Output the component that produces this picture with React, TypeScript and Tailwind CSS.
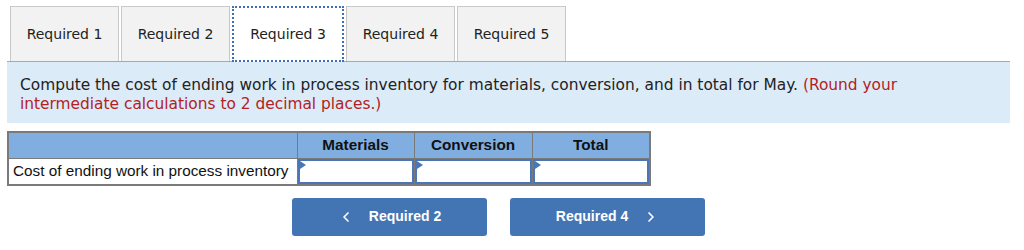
import React from "react";
import { ChevronLeft, ChevronRight } from "lucide-react";

const tabs = ["Required 1", "Required 2", "Required 3", "Required 4", "Required 5"];

const InputCell = () => (
  <td className="p-0 border border-[#7a7a7a]">
    <div className="relative h-[25px] border-2 border-[#4a76b6] bg-white">
      <span className="absolute left-0 top-0 w-0 h-0 border-t-[4px] border-b-[4px] border-l-[6px] border-t-transparent border-b-transparent border-l-[#4a76b6]" />
    </div>
  </td>
);

const App = () => {
  const active = 2;

  return (
    <div className="w-[1024px] h-[250px] bg-white overflow-hidden" style={{ fontFamily: "'DejaVu Sans', Verdana, sans-serif" }}>
      <div className="flex gap-[2px] pl-[10px] pt-[6px]">
        {tabs.map((t, i) =>
          i === active ? (
            <div
              key={t}
              className="w-[112px] h-[56px] flex items-center justify-center bg-white border-2 border-dotted border-[#3f6fb5] text-[14px] text-[#222] -mb-[1px] z-10"
            >
              {t}
            </div>
          ) : (
            <div
              key={t}
              className="w-[109px] h-[55px] flex items-center justify-center bg-[#f2f2f2] border border-[#c8c8c8] border-b-0 text-[14px] text-[#222]"
            >
              {t}
            </div>
          )
        )}
      </div>

      <div className="ml-[7px] w-[1003px] h-[62px] border-t border-[#a9a9a9] bg-[#dcebf8] px-[13px] pt-[14px] text-[15.4px] leading-[19px] text-[#222]">
        Compute the cost of ending work in process inventory for materials, conversion, and in total for May.{" "}
        <span className="text-[#b22222]">(Round your intermediate calculations to 2 decimal places.)</span>
      </div>

      <table
        className="ml-[7px] mt-[8px] border-collapse border-2 border-[#7a7a7a] text-[15.3px] text-[#111]"
        style={{ fontFamily: "'Liberation Sans', Arial, sans-serif" }}
      >
        <thead>
          <tr className="bg-[#80aee0] h-[26px]">
            <th className="w-[289px] border border-[#7a7a7a]" />
            <th className="w-[117px] border border-[#7a7a7a] font-bold">Materials</th>
            <th className="w-[118px] border border-[#7a7a7a] font-bold">Conversion</th>
            <th className="w-[118px] border border-[#7a7a7a] font-bold">Total</th>
          </tr>
        </thead>
        <tbody>
          <tr className="h-[26px]">
            <td className="border border-[#7a7a7a] px-[4px] text-left whitespace-nowrap leading-[18px]">Cost of ending work in process inventory</td>
            <InputCell />
            <InputCell />
            <InputCell />
          </tr>
        </tbody>
      </table>

      <div className="flex gap-[23px] ml-[292px] mt-[12px]" style={{ fontFamily: "'Liberation Sans', Arial, sans-serif" }}>
        <button className="w-[195px] h-[38px] rounded-[3px] bg-[#4374b3] text-white text-[14px] font-bold flex items-center justify-center gap-[15px]">
          <ChevronLeft size={16} strokeWidth={2.5} />
          <span>Required 2</span>
        </button>
        <button className="w-[195px] h-[38px] rounded-[3px] bg-[#4374b3] text-white text-[14px] font-bold flex items-center justify-center gap-[15px]">
          <span>Required 4</span>
          <ChevronRight size={16} strokeWidth={2.5} />
        </button>
      </div>
    </div>
  );
};

export default App;
